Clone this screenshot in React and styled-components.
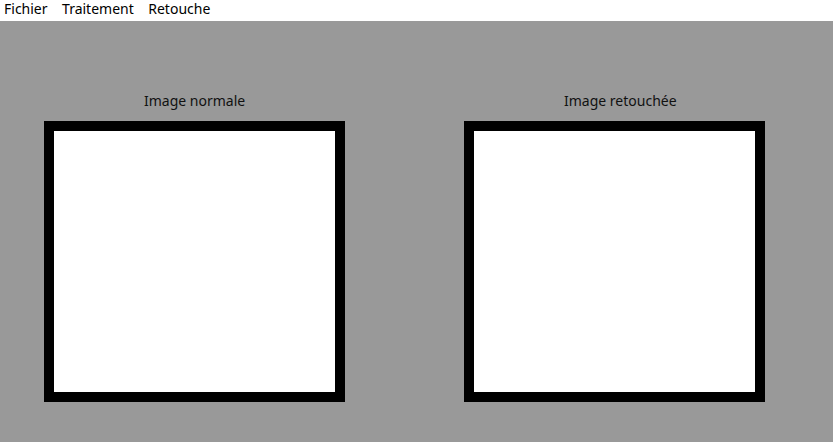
import styled, { createGlobalStyle } from 'styled-components';

const Global = createGlobalStyle`
	html, body {
		margin: 0;
		padding: 0;
		height: 100%;
		background: #999999;
		font-family: "Noto Sans", "Open Sans", sans-serif;
	}
	#root {
		height: 100%;
	}
`;

export default function App(){
	const menus = ['Fichier', 'Traitement', 'Retouche'];
	const panels = ['Image normale', 'Image retouchée'];

	return(
		<Page>
			<Global />
			<MenuBar>
				{menus.map((m, i) =>
					<MenuItem key={i}>{m}</MenuItem>
				)}
			</MenuBar>
			<Workspace>
				{panels.map((label, i) =>
					<Panel key={i}>
						<Label>{label}</Label>
						<Frame />
					</Panel>
				)}
			</Workspace>
		</Page>
	)
}

const Page = styled.div`
	display: flex;
	flex-direction: column;
	height: 100%;
`;

const MenuBar = styled.div`
	display: flex;
	height: 21px;
	background: #ffffff;
	padding-left: 4px;
	gap: 14.5px;
	align-items: flex-start;
`;

const MenuItem = styled.span`
	font-size: 14px;
	color: #000;
	line-height: 17px;
`;

const Workspace = styled.div`
	display: flex;
	padding: 70px 0 0 44px;
	gap: 119px;
`;

const Panel = styled.div`
	display: flex;
	flex-direction: column;
	gap: 10px;
`;

const Label = styled.div`
	font-size: 14px;
	line-height: 20px;
	color: #111;
	padding-left: 100px;
`;

const Frame = styled.div`
	width: 281px;
	height: 261px;
	border: 10px solid #000;
	background: #fff;
`;
